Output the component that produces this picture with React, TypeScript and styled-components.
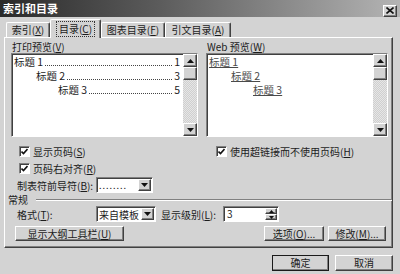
import React from "react";
import styled, { createGlobalStyle, css } from "styled-components";

const Global = createGlobalStyle`
  html, body { margin: 0; padding: 0; background: #d3d3d3; }
  body {
    width: 400px; height: 274px; overflow: hidden;
    font-family: "Noto Sans CJK SC", "DejaVu Sans", sans-serif;
    font-size: 10px; color: #1c1c1c;
  }
  * { box-sizing: border-box; }
`;

const raised = css`
  border: 1px solid;
  border-color: #ffffff #404040 #404040 #ffffff;
  box-shadow: inset -1px -1px 0 #808080;
  background: #d3d3d3;
`;

const sunken = css`
  border: 1px solid;
  border-color: #808080 #ffffff #ffffff #808080;
  box-shadow: inset 1px 1px 0 #404040;
`;

const Dialog = styled.div`
  width: 400px;
  height: 274px;
  background: #d3d3d3;
  display: flex;
  flex-direction: column;
`;

const TitleBar = styled.div`
  height: 17px;
  flex: none;
  display: flex;
  align-items: center;
  justify-content: space-between;
  padding: 0 3px 0 3px;
  background: linear-gradient(to right, #2a2a2a 0%, #5c5c5c 40%, #b4b4b4 100%);
`;

const Title = styled.span`
  color: #ffffff;
  font-weight: bold;
  font-size: 11px;
  line-height: 17px;
`;

const CloseBtn = styled.div`
  ${raised};
  width: 14px;
  height: 12px;
  display: flex;
  align-items: center;
  justify-content: center;
  margin-top: 4px;
`;

const TabStrip = styled.div`
  height: 20px;
  flex: none;
  display: flex;
  align-items: flex-end;
  padding-left: 6px;
`;

const Tab = styled.div<{ $w: number; $active?: boolean }>`
  width: ${(p) => p.$w}px;
  height: ${(p) => (p.$active ? 19 : 15)}px;
  display: flex;
  align-items: center;
  justify-content: center;
  border-top: 1px solid #ffffff;
  border-left: 1px solid #ffffff;
  border-right: 1px solid #404040;
  box-shadow: inset -1px 0 0 #808080;
  border-radius: 2px 2px 0 0;
  background: #d3d3d3;
  line-height: 12px;
  white-space: nowrap;
  ${(p) =>
    p.$active &&
    css`
      position: relative;
      z-index: 1;
      margin-bottom: -1px;
      padding-bottom: 1px;
    `}
`;

const Focus = styled.span`
  outline: 1px dotted #333;
  outline-offset: 1px;
  padding: 0 1px;
`;

const Panel = styled.div`
  margin-left: 4px;
  width: 389px;
  height: 211px;
  flex: none;
  border: 1px solid;
  border-color: #ffffff #404040 #404040 #ffffff;
  box-shadow: inset -1px -1px 0 #808080;
  display: flex;
  flex-direction: column;
`;

const Columns = styled.div`
  display: grid;
  grid-template-columns: 187px 182px;
  column-gap: 8px;
  padding: 2px 0 0 6px;
`;

const Column = styled.div`
  display: flex;
  flex-direction: column;
`;

const GroupLabel = styled.div`
  height: 13px;
  line-height: 13px;
  padding-left: 1px;
`;

const PreviewBox = styled.div`
  ${sunken};
  height: 84px;
  display: flex;
  background: #ffffff;
`;

const PreviewList = styled.div`
  flex: 1;
  padding: 1px 3px 0 2px;
  display: flex;
  flex-direction: column;
  font-size: 10.5px;
`;

const TocLine = styled.div<{ $level: number }>`
  height: 14px;
  line-height: 14px;
  display: flex;
  align-items: flex-end;
  padding-left: ${(p) => p.$level * 22}px;
  white-space: nowrap;
`;

const Leader = styled.span`
  flex: 1;
  border-bottom: 1px dotted #444;
  margin: 0 2px 3px 2px;
`;

const WebLink = styled.div<{ $level: number }>`
  height: 14px;
  line-height: 14px;
  padding-left: ${(p) => p.$level * 22}px;
  color: #4a4a4a;
  white-space: nowrap;
  span { text-decoration: underline; text-underline-offset: 1px; }
`;

const ScrollBar = styled.div`
  width: 14px;
  flex: none;
  display: flex;
  flex-direction: column;
  background: repeating-conic-gradient(#e6e6e6 0 25%, #cfcfcf 0 50%) 0 0 / 2px 2px;
`;

const ScrollBtn = styled.div`
  ${raised};
  width: 14px;
  height: 13px;
  flex: none;
  display: flex;
  align-items: center;
  justify-content: center;
`;

const ScrollThumb = styled.div`
  ${raised};
  width: 14px;
  height: 13px;
  flex: none;
`;

const ScrollTrack = styled.div`
  flex: 1;
`;

const CheckRow = styled.div<{ $indent: number; $top?: number }>`
  height: 17px;
  display: flex;
  align-items: center;
  gap: 3px;
  padding-left: ${(p) => p.$indent}px;
  margin-top: ${(p) => p.$top ?? 0}px;
  white-space: nowrap;
`;

const CheckBox = styled.span`
  ${sunken};
  width: 11px;
  height: 11px;
  background: #ffffff;
  display: inline-flex;
  align-items: center;
  justify-content: center;
  flex: none;
`;

const FieldRow = styled.div<{ $indent: number; $top?: number }>`
  height: 16px;
  display: flex;
  align-items: center;
  padding-left: ${(p) => p.$indent}px;
  margin-top: ${(p) => p.$top ?? 0}px;
  white-space: nowrap;
`;

const FieldLabel = styled.span<{ $w: number; $ml?: number }>`
  width: ${(p) => p.$w}px;
  margin-left: ${(p) => p.$ml ?? 0}px;
  flex: none;
`;

const Select = styled.div<{ $w: number }>`
  ${sunken};
  width: ${(p) => p.$w}px;
  height: 16px;
  background: #ffffff;
  display: flex;
  align-items: center;
  padding: 0 1px 0 2px;
  flex: none;
`;

const SelectText = styled.span<{ $dots?: boolean }>`
  flex: 1;
  min-width: 0;
  font-size: ${(p) => (p.$dots ? 9 : 10)}px;
  letter-spacing: ${(p) => (p.$dots ? 1 : 0)}px;
  line-height: 13px;
  white-space: nowrap;
`;

const DropBtn = styled.div`
  ${raised};
  width: 13px;
  height: 12px;
  flex: none;
  display: flex;
  align-items: center;
  justify-content: center;
`;

const Spin = styled.div`
  ${sunken};
  width: 56px;
  height: 16px;
  background: #ffffff;
  display: flex;
  align-items: stretch;
  padding: 1px 1px 1px 3px;
  flex: none;
`;

const SpinText = styled.span`
  flex: 1;
  line-height: 12px;
`;

const SpinBtns = styled.div`
  width: 12px;
  display: flex;
  flex-direction: column;
`;

const SpinBtn = styled.div`
  ${raised};
  flex: 1;
  display: flex;
  align-items: center;
  justify-content: center;
`;

const SectionHead = styled.div`
  height: 12px;
  display: flex;
  align-items: center;
  padding-left: 3px;
  margin-top: 1px;
  line-height: 12px;
`;

const Groove = styled.span`
  flex: 1;
  height: 2px;
  margin-left: 8px;
  border-top: 1px solid #808080;
  border-bottom: 1px solid #ffffff;
`;

const ButtonRow = styled.div<{ $top: number; $right: number; $left?: number }>`
  display: flex;
  align-items: center;
  gap: 4px;
  margin-top: ${(p) => p.$top}px;
  padding-left: ${(p) => p.$left ?? 0}px;
  padding-right: ${(p) => p.$right}px;
`;

const Spacer = styled.span`
  flex: 1;
`;

const Button = styled.div<{ $w: number; $h?: number; $default?: boolean }>`
  ${raised};
  width: ${(p) => p.$w}px;
  height: ${(p) => p.$h ?? 15}px;
  display: flex;
  align-items: center;
  justify-content: center;
  line-height: 12px;
  white-space: nowrap;
  flex: none;
  ${(p) =>
    p.$default &&
    css`
      outline: 1px solid #1a1a1a;
      outline-offset: -1px;
      border-color: #ffffff #1a1a1a #1a1a1a #ffffff;
    `}
`;

const Footer = styled.div`
  display: flex;
  justify-content: flex-end;
  gap: 6px;
  padding-right: 7px;
  margin-top: 7px;
`;

const Up = () => (
  <svg width="7" height="4" viewBox="0 0 7 4">
    <path d="M3.5 0 L7 4 L0 4 Z" fill="#111" />
  </svg>
);
const Down = () => (
  <svg width="7" height="4" viewBox="0 0 7 4">
    <path d="M0 0 L7 0 L3.5 4 Z" fill="#111" />
  </svg>
);
const Tiny = ({ up }: { up?: boolean }) => (
  <svg width="5" height="3" viewBox="0 0 5 3">
    <path d={up ? "M2.5 0 L5 3 L0 3 Z" : "M0 0 L5 0 L2.5 3 Z"} fill="#111" />
  </svg>
);
const Check = () => (
  <svg width="7" height="7" viewBox="0 0 7 7">
    <path d="M0.5 3.5 L2.5 5.5 L6.5 1" stroke="#111" strokeWidth="1.6" fill="none" />
  </svg>
);

const Scroll = () => (
  <ScrollBar>
    <ScrollBtn>
      <Up />
    </ScrollBtn>
    <ScrollThumb />
    <ScrollTrack />
    <ScrollBtn>
      <Down />
    </ScrollBtn>
  </ScrollBar>
);

const toc = [
  { t: "标题 1", p: "1" },
  { t: "标题 2", p: "3" },
  { t: "标题 3", p: "5" },
];

export default function App() {
  return (
    <>
      <Global />
      <Dialog>
        <TitleBar>
          <Title>索引和目录</Title>
          <CloseBtn>
            <svg width="8" height="7" viewBox="0 0 8 7">
              <path d="M0.5 0.5 L7.5 6.5 M7.5 0.5 L0.5 6.5" stroke="#111" strokeWidth="1.6" />
            </svg>
          </CloseBtn>
        </TitleBar>
        <TabStrip>
          <Tab $w={44}>
            索引(<u>X</u>)
          </Tab>
          <Tab $w={51} $active>
            <Focus>
              目录(<u>C</u>)
            </Focus>
          </Tab>
          <Tab $w={64}>
            图表目录(<u>F</u>)
          </Tab>
          <Tab $w={66}>
            引文目录(<u>A</u>)
          </Tab>
        </TabStrip>
        <Panel>
          <Columns>
            <Column>
              <GroupLabel>
                打印预览(<u>V</u>)
              </GroupLabel>
              <PreviewBox>
                <PreviewList>
                  {toc.map((e, i) => (
                    <TocLine key={i} $level={i}>
                      <span>{e.t}</span>
                      <Leader />
                      <span>{e.p}</span>
                    </TocLine>
                  ))}
                </PreviewList>
                <Scroll />
              </PreviewBox>
              <CheckRow $indent={8} $top={6}>
                <CheckBox>
                  <Check />
                </CheckBox>
                <span>
                  显示页码(<u>S</u>)
                </span>
              </CheckRow>
              <CheckRow $indent={8}>
                <CheckBox>
                  <Check />
                </CheckBox>
                <span>
                  页码右对齐(<u>R</u>)
                </span>
              </CheckRow>
              <FieldRow $indent={6}>
                <FieldLabel $w={79}>
                  制表符前导符(<u>B</u>):
                </FieldLabel>
                <Select $w={57}>
                  <SelectText $dots>........</SelectText>
                  <DropBtn>
                    <Down />
                  </DropBtn>
                </Select>
              </FieldRow>
            </Column>
            <Column>
              <GroupLabel>
                Web 预览(<u>W</u>)
              </GroupLabel>
              <PreviewBox>
                <PreviewList>
                  {toc.map((e, i) => (
                    <WebLink key={i} $level={i}>
                      <span>{e.t}</span>
                    </WebLink>
                  ))}
                </PreviewList>
                <Scroll />
              </PreviewBox>
              <CheckRow $indent={10} $top={6}>
                <CheckBox>
                  <Check />
                </CheckBox>
                <span>
                  使用超链接而不使用页码(<u>H</u>)
                </span>
              </CheckRow>
            </Column>
          </Columns>
          <SectionHead>
            <span>常规</span>
            <Groove />
          </SectionHead>
          <FieldRow $indent={12}>
            <FieldLabel $w={79}>
              格式(<u>T</u>):
            </FieldLabel>
            <Select $w={60}>
              <SelectText>来自模板</SelectText>
              <DropBtn>
                <Down />
              </DropBtn>
            </Select>
            <FieldLabel $w={62} $ml={5}>
              显示级别(<u>L</u>):
            </FieldLabel>
            <Spin>
              <SpinText>3</SpinText>
              <SpinBtns>
                <SpinBtn>
                  <Tiny up />
                </SpinBtn>
                <SpinBtn>
                  <Tiny />
                </SpinBtn>
              </SpinBtns>
            </Spin>
          </FieldRow>
          <ButtonRow $top={4} $left={10} $right={6}>
            <Button $w={109}>
              显示大纲工具栏(<u>U</u>)
            </Button>
            <Spacer />
            <Button $w={60}>
              选项(<u>O</u>)...
            </Button>
            <Button $w={58}>
              修改(<u>M</u>)...
            </Button>
          </ButtonRow>
        </Panel>
        <Footer>
          <Button $w={57} $h={16} $default>
            确定
          </Button>
          <Button $w={58} $h={16}>
            取消
          </Button>
        </Footer>
      </Dialog>
    </>
  );
}
